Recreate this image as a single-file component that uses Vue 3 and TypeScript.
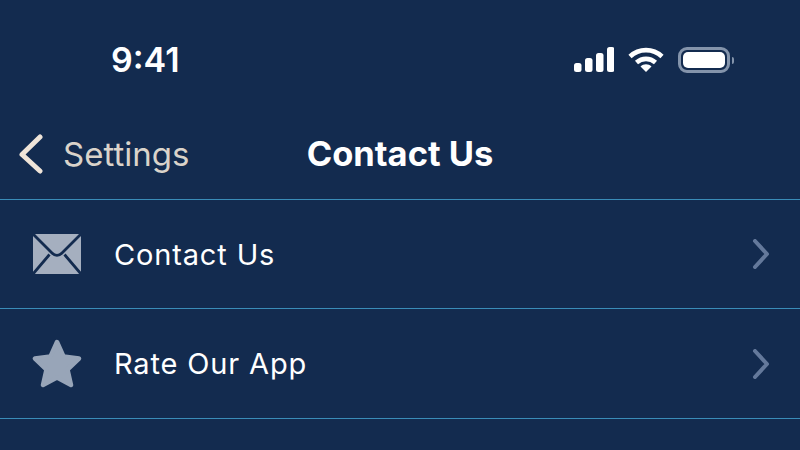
<script setup lang="ts">
interface Row {
  label: string
  icon: 'mail' | 'star'
}

const rows: Row[] = [
  { label: 'Contact Us', icon: 'mail' },
  { label: 'Rate Our App', icon: 'star' }
]
</script>

<template>
  <div class="screen">
    <div class="status">
      <span class="time">9:41</span>
      <div class="status-icons">
        <svg width="40" height="26" viewBox="0 0 40 26" fill="#fff">
          <rect x="0" y="16" width="7.5" height="9" rx="2.5" />
          <rect x="11" y="11" width="7.5" height="14" rx="2.5" />
          <rect x="22" y="6" width="7.5" height="19" rx="2.5" />
          <rect x="33" y="0" width="7.5" height="25" rx="2.5" />
        </svg>
        <svg width="36" height="26" viewBox="0 0 36 26" fill="none" stroke="#fff" stroke-width="4.6">
          <path d="M2 9.5C11 1 25 1 34 9.5" />
          <path d="M8.5 15.5C14 10.6 22 10.6 27.5 15.5" />
          <path d="M12.5 19.6L18 25L23.5 19.6C20.5 16.6 15.5 16.6 12.5 19.6Z" fill="#fff" stroke="none" />
        </svg>
        <div class="battery">
          <div class="battery-body"><div class="battery-fill"></div></div>
          <div class="battery-cap"></div>
        </div>
      </div>
    </div>

    <header class="nav">
      <div class="back">
        <svg width="26" height="40" viewBox="0 0 26 40" fill="none" stroke="#efe4d8" stroke-width="5" stroke-linecap="round" stroke-linejoin="round">
          <path d="M22 3L4 20.5L22 37" />
        </svg>
        <span>Settings</span>
      </div>
      <h1>Contact Us</h1>
    </header>

    <ul class="list">
      <li v-for="row in rows" :key="row.label" class="row">
        <span class="icon">
          <svg v-if="row.icon === 'mail'" width="48" height="40" viewBox="0 0 48 40">
            <rect x="0" y="0" width="48" height="40" rx="3" fill="#a5afbf" />
            <path d="M0 0L19 19C22 22 26 22 29 19L48 0M0 40L16.5 20.5M48 40L31.5 20.5" fill="none" stroke="#132b4f" stroke-width="2.8" />
          </svg>
          <svg v-else width="50" height="50" viewBox="0 0 50 50">
            <path d="M25 3L31.5 17.5L47 19.5L35.5 30.5L39 46L25 38.5L11 46L14.5 30.5L3 19.5L18.5 17.5Z" fill="#98a5b8" stroke="#98a5b8" stroke-width="4.5" stroke-linejoin="round" />
          </svg>
        </span>
        <span class="label">{{ row.label }}</span>
        <svg class="chevron" width="18" height="30" viewBox="0 0 18 30" fill="none" stroke="#64799b" stroke-width="4" stroke-linecap="round" stroke-linejoin="round">
          <path d="M3 2L15 15L3 28" />
        </svg>
      </li>
    </ul>
  </div>
</template>

<style scoped>
.screen {
  width: 800px;
  height: 450px;
  overflow: hidden;
  background: #132b4f;
  color: #fff;
  font-family: Inter, Roboto, sans-serif;
}

.status {
  height: 112px;
  padding: 0 66px 0 111px;
  box-sizing: border-box;
  display: flex;
  justify-content: space-between;
  align-items: flex-start;
}

.time {
  margin-top: 39px;
  font-size: 34px;
  line-height: 42px;
  font-weight: 600;
}

.status-icons {
  margin-top: 47px;
  display: flex;
  align-items: center;
  gap: 14px;
}

.battery {
  display: flex;
  align-items: center;
  gap: 2px;
}

.battery-body {
  width: 52px;
  height: 26px;
  box-sizing: border-box;
  padding: 2px;
  border: 3px solid #8494ab;
  border-radius: 9px;
}

.battery-fill {
  height: 100%;
  border-radius: 5px;
  background: #fff;
}

.battery-cap {
  width: 2px;
  height: 7px;
  border-radius: 0 2px 2px 0;
  background: #8494ab;
}

.nav {
  position: relative;
  height: 88px;
  box-sizing: border-box;
  padding: 0 0 3px 18px;
  display: flex;
  align-items: center;
  border-bottom: 1px solid #3a8cb8;
}

.back {
  display: flex;
  align-items: center;
  gap: 19px;
  color: #dad3ca;
  font-size: 33px;
}

.nav h1 {
  position: absolute;
  left: 0;
  right: 0;
  top: 20px;
  margin: 0;
  text-align: center;
  font-size: 34.5px;
  line-height: 44px;
  font-weight: 700;
}

.list {
  margin: 0;
  padding: 0;
  list-style: none;
}

.row {
  height: 110px;
  box-sizing: border-box;
  padding: 0 30px 0 32px;
  display: flex;
  align-items: center;
  border-bottom: 1px solid #3a8cb8;
}

.row:first-child {
  height: 109px;
}

.icon {
  width: 50px;
  margin-right: 33px;
  display: flex;
  justify-content: center;
}

.label {
  flex: 1;
  font-size: 29px;
  letter-spacing: 0.85px;
  margin-left: -1px;
}
</style>
